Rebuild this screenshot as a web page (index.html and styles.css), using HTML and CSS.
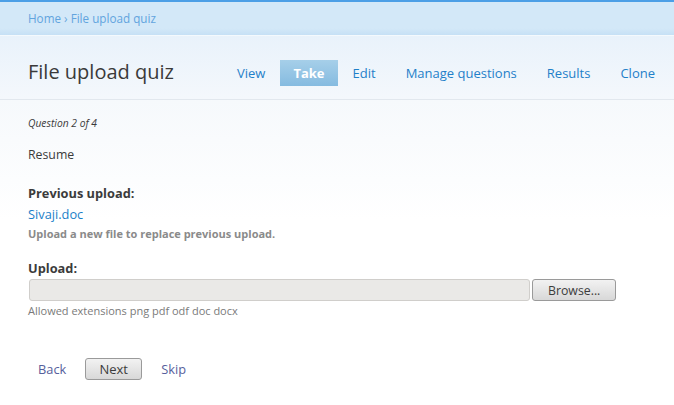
FILE: index.html
```html
<!DOCTYPE html>
<html lang="en">
<head>
    <meta charset="UTF-8">
    <title>File upload quiz</title>
    <link rel="stylesheet" href="styles.css">
</head>
<body>

<div class="breadcrumb">
    <a href="#">Home</a> › <a href="#">File upload quiz</a>
</div>

<header class="page-header">
    <h1>File upload quiz</h1>
    <ul class="tabs">
        <li><a href="#">View</a></li>
        <li><a href="#" class="active">Take</a></li>
        <li><a href="#">Edit</a></li>
        <li><a href="#">Manage questions</a></li>
        <li><a href="#">Results</a></li>
        <li><a href="#">Clone</a></li>
    </ul>
</header>

<div class="content">
    <div class="question-number">Question 2 of 4</div>
    <p class="question-text">Resume</p>

    <!-- previous upload -->
    <div class="field">
        <label>Previous upload:</label>
        <a href="#" class="file-link">Sivaji.doc</a>
        <div class="hint">Upload a new file to replace previous upload.</div>
    </div>

    <div class="field upload">
        <label for="upload">Upload:</label>
        <div class="file-row">
            <input type="text" id="upload" disabled>
            <button type="button" class="btn">Browse...</button>
        </div>
        <div class="description">Allowed extensions png pdf odf doc docx</div>
    </div>

    <div class="actions">
        <a href="#" class="nav-link">Back</a>
        <button type="button" class="btn next">Next</button>
        <a href="#" class="nav-link">Skip</a>
    </div>
</div>

</body>
</html>
```

FILE: styles.css
```css
body {
    font-family: 'Open Sans', sans-serif;
    margin: 0;
    padding: 0;
    color: #3b3b3b;
    background: linear-gradient(to right, #eaf3fb 0, #ffffff 4px) no-repeat, #fff;
}

a {
    text-decoration: none;
}

.breadcrumb {
    border-top: 2px solid #4c9fe6;
    background: linear-gradient(to bottom, #d3e8f8 0, #d3e8f8 80%, #c6e0f5 100%);
    border-bottom: 1px solid #f4f9fd;
    height: 33px;
    line-height: 33px;
    padding-left: 28px;
    font-size: 11.7px;
    color: #6aa8e0;
}

.breadcrumb a {
    color: #62a4de;
}

.page-header {
    display: flex;
    align-items: center;
    height: 55px;
    padding: 8px 0 0 28px;
    background: linear-gradient(to bottom, #e9f2fb 0, #f4f8fc 100%);
    border-bottom: 1px solid #e2e8ee;
}

h1 {
    margin: 0;
    font-size: 20px;
    font-weight: normal;
    color: #3a3a3a;
    flex: 1;
}

.tabs {
    list-style: none;
    margin: 3px 0 0;
    padding: 0 4px 0 0;
    display: flex;
}

.tabs a {
    display: block;
    padding: 4px 15px;
    font-size: 13px;
    color: #1f80c9;
}

.tabs a.active {
    padding: 4px 13px;
    background: linear-gradient(to bottom, #a6cfe9 0, #85bbe0 100%);
    color: #fff;
    font-weight: bold;
}

.content {
    padding: 16px 28px;
    font-size: 12.3px;
    background: linear-gradient(to bottom, #f6f9fc 0, #ffffff 120px) no-repeat;
}

.question-number {
    font-style: italic;
    font-size: 10.3px;
}

.question-text {
    margin: 16px 0 21px;
}

.field {
    margin-bottom: 18px;
}

label {
    display: block;
    font-weight: bold;
    font-size: 12.8px;
    margin-bottom: 3px;
}

.upload label {
    margin-bottom: 2px;
}

.file-link {
    color: #1a7fc9;
    font-size: 12.8px;
}

.hint {
    font-size: 11px;
    font-weight: bold;
    color: #8a8a8a;
    margin-top: 3px;
}

.file-row {
    display: flex;
    gap: 2px;
    padding-left: 1px;
}

.file-row input {
    width: 501px;
    height: 22px;
    box-sizing: border-box;
    border: 1px solid #d0cecb;
    border-radius: 3px;
    background: #eae9e7;
    margin: 0;
}

.btn {
    font-family: 'Open Sans', sans-serif;
    font-size: 12.3px;
    color: #3c3c3c;
    height: 22px;
    padding: 0 15px;
    border: 1px solid #9a9a9a;
    border-radius: 3px;
    background: linear-gradient(to bottom, #f2f2f2 0, #d8d8d8 100%);
}

.description {
    font-size: 11px;
    color: #7a7a7a;
    margin-top: 2px;
}

.actions {
    display: flex;
    align-items: center;
    gap: 19px;
    padding: 22px 0 0 10px;
}

.nav-link {
    color: #56609c;
    font-size: 12.8px;
}

.btn.next {
    width: 57px;
    padding: 0;
    font-size: 13px;
}
```
